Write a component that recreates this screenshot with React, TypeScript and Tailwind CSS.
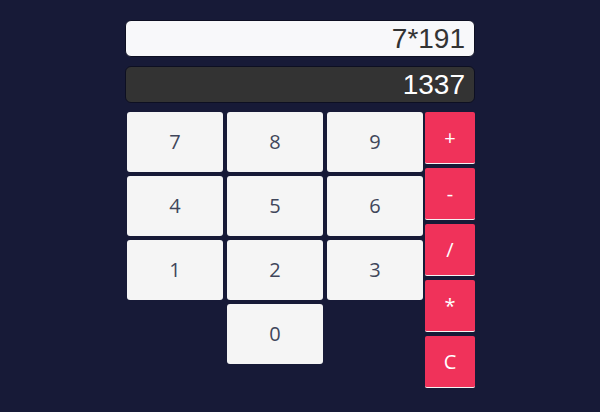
import { useState } from "react";

const digitRows = [["7", "8", "9"], ["4", "5", "6"], ["1", "2", "3"]];
const ops = ["+", "-", "/", "*", "C"];

export default function App() {
  const [expr, setExpr] = useState("7*191");
  const [result, setResult] = useState("1337");

  const press = (k: string) => {
    if (k === "C") {
      setExpr("");
      setResult("");
      return;
    }
    const next = expr + k;
    setExpr(next);
    try {
      // eslint-disable-next-line no-new-func
      const v = Function(`return (${next})`)();
      if (typeof v === "number" && isFinite(v)) setResult(String(v));
    } catch {
      /* incomplete expression */
    }
  };

  return (
    <div className="min-h-[412px] w-full bg-[#171a37] flex justify-center pt-[20px]">
      <div className="w-[350px] flex flex-col">
        <input
          readOnly
          value={expr}
          className="h-[37px] w-full rounded-[6px] border border-[#0d0f22] bg-[#f8f8fa] px-[9px] text-right text-[28px] text-[#333] font-['Liberation_Sans',Arial,sans-serif] outline-none"
        />
        <input
          readOnly
          value={result}
          className="mt-[9px] h-[37px] w-full rounded-[6px] border border-[#0d0f22] bg-[#333333] px-[9px] text-right text-[28px] text-white font-['Liberation_Sans',Arial,sans-serif] outline-none"
        />

        <div className="mt-[9px] flex items-start pl-[2px] gap-[2px]">
          <div className="w-[296px] grid grid-cols-3 gap-[4px]">
            {digitRows.flat().map((d) => (
              <button
                key={d}
                onClick={() => press(d)}
                className="h-[60px] rounded-[3px] bg-[#f5f5f5] text-[20px] text-[#40465a] font-['Open_Sans',sans-serif]"
              >
                {d}
              </button>
            ))}
            <div />
            <button
              onClick={() => press("0")}
              className="h-[60px] rounded-[3px] bg-[#f5f5f5] text-[20px] text-[#40465a] font-['Open_Sans',sans-serif]"
            >
              0
            </button>
          </div>

          <div className="w-[50px] flex flex-col gap-[4px]">
            {ops.map((o) => (
              <button
                key={o}
                onClick={() => press(o)}
                className="h-[52px] rounded-[2px] bg-[#f0325a] border-b border-[#f3f3f3] text-[20px] text-white font-['Open_Sans',sans-serif]"
              >
                {o}
              </button>
            ))}
          </div>
        </div>
      </div>
    </div>
  );
}
